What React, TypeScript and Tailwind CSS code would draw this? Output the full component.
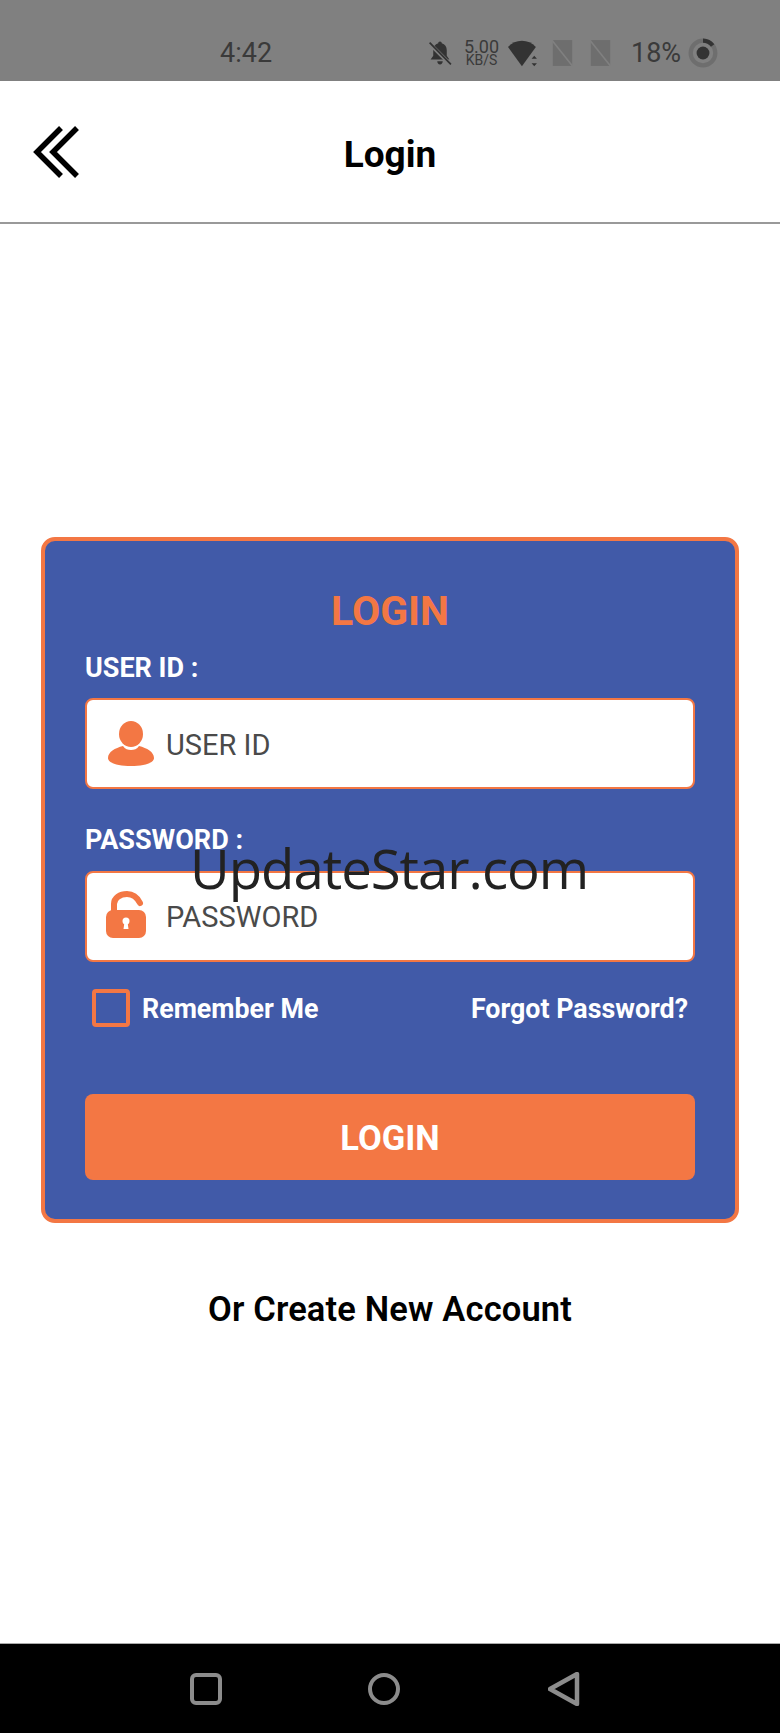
export default function App() {
  return (
    <div className="relative flex h-[1733px] w-[780px] flex-col overflow-hidden bg-white font-['Roboto',sans-serif]">
      <div className="flex h-[81px] shrink-0 items-center bg-[#808080] pl-[220px] pt-[25px] text-[#3a3a3a]">
        <span className="w-[208px] shrink-0 text-[27px] leading-none">4:42</span>
        <svg viewBox="0 0 22 24" className="h-[27px] w-[24px] shrink-0" fill="#333">
          <path d="M11 1c1 0 1.6.7 1.6 1.6 3 .8 4.6 3.2 4.6 6.4v5l2.4 3.4H2.4L4.800 14V9c0-3.200 1.600-5.600 4.600-6.400C9.400 1.700 10 1 11 1zM8.500 19h5c0 1.700-1 3-2.500 3s-2.500-1.300-2.500-3z" />
          <path d="M1.500 3 20.500 22" stroke="#808080" strokeWidth="3.500" />
          <path d="M1.500 2 21 22" stroke="#333" strokeWidth="1.600" />
        </svg>
        <div className="ml-[12px] flex w-[35px] shrink-0 flex-col items-center text-[#3a3a3a]">
          <span className="text-[18px] leading-[15px]">5.00</span>
          <span className="text-[14px] leading-[13px]">KB/S</span>
        </div>
        <svg viewBox="0 0 28 26" className="ml-[9px] h-[29px] w-[30px] shrink-0" fill="#333">
          <path d="M0 7C3.500 3 8 1 13 1s9.500 2 13 6L13 25z" />
          <path d="M24.500 15l2.500 3h-5zM24.500 25l-2.500-3h5z" />
        </svg>
        <svg viewBox="0 0 20 26" className="ml-[13px] h-[28px] w-[23px] shrink-0">
          <path d="M1 1h18v24H1z" fill="#6e6e6e" />
          <path d="M0 1 20 26" stroke="#808080" strokeWidth="1.500" />
        </svg>
        <svg viewBox="0 0 20 26" className="ml-[15px] h-[28px] w-[23px] shrink-0">
          <path d="M1 1h18v24H1z" fill="#6e6e6e" />
          <path d="M0 1 20 26" stroke="#808080" strokeWidth="1.500" />
        </svg>
        <span className="ml-[19px] w-[57px] shrink-0 text-[27px] leading-none">18%</span>
        <svg viewBox="0 0 28 28" className="h-[30px] w-[30px] shrink-0" fill="none">
          <circle cx="14" cy="14" r="11.500" stroke="#6e6e6e" strokeWidth="4" />
          <path d="M14 2.500A11.500 11.500 0 0 1 23 7" stroke="#333" strokeWidth="4" />
          <circle cx="14" cy="14" r="6" fill="#333" />
        </svg>
      </div>

      <header className="relative flex h-[143px] shrink-0 items-center justify-center border-b-2 border-[#999999] bg-white pt-[6px]">
        <svg viewBox="0 0 46 52" className="absolute left-[33px] top-[45px] h-[52px] w-[46px]" fill="none" stroke="#000" strokeWidth="5.500">
          <path d="M28 2 4 26l24 24" />
          <path d="M44 2 20 26l24 24" />
        </svg>
        <h1 className="text-[37px] font-bold leading-none text-black">Login</h1>
      </header>

      <main className="flex flex-1 flex-col items-center pt-[313px]">
        <section className="flex h-[686px] w-[698px] flex-col rounded-[14px] border-4 border-[#F37744] bg-[#415AA8] px-[40px]">
          <h2 className="mt-[47px] text-center text-[41px] font-bold leading-[46px] text-[#F37744]">LOGIN</h2>
          <label className="mt-[19px] text-[27px] font-bold leading-[30px] text-white">USER ID :</label>
          <div className="mt-[15px] flex h-[91px] items-center rounded-lg border-2 border-[#F37744] bg-white">
            <svg viewBox="0 0 46 46" className="ml-[21px] h-[46px] w-[46px] shrink-0" fill="#F37744">
              <ellipse cx="23" cy="13" rx="12" ry="13" />
              <path d="M0 37c0-6 7-10 15-12 2 3 5 4 8 4s6-1 8-4c8 2 15 6 15 12 0 5-10 8-23 8S0 42 0 37z" />
            </svg>
            <span className="ml-[12px] pt-[4px] text-[29px] leading-none text-[#4a4a4a]">USER ID</span>
          </div>
          <label className="mt-[36px] text-[27px] font-bold leading-[30px] text-white">PASSWORD :</label>
          <div className="mt-[16px] flex h-[91px] items-center rounded-lg border-2 border-[#F37744] bg-white">
            <svg viewBox="0 0 40 47" className="mb-[4px] ml-[19px] h-[47px] w-[40px] shrink-0" fill="none">
              <path d="M8 21v-8C8 7 14 3 21 3c6 0 10 3 13 9" stroke="#F37744" strokeWidth="6" strokeLinecap="round" />
              <rect x="0" y="19" width="40" height="28" rx="7" fill="#F37744" />
              <circle cx="20" cy="30" r="3.500" fill="#fff" />
              <path d="M18.500 31h3l1 7h-5z" fill="#fff" />
            </svg>
            <span className="ml-[20px] pt-[2px] text-[29px] leading-none text-[#4a4a4a]">PASSWORD</span>
          </div>
          <div className="mt-[27px] flex items-center">
            <span className="ml-[7px] h-[38px] w-[38px] shrink-0 rounded-[4px] border-4 border-[#F37744]" />
            <span className="ml-[12px] pt-[2px] text-[26.800px] font-bold leading-none text-white">Remember Me</span>
            <span className="ml-auto mr-[7px] pt-[2px] text-[26.800px] font-bold leading-none text-white">Forgot Password?</span>
          </div>
          <button className="mt-[67px] h-[86px] rounded-lg bg-[#F37744] pt-[4px] text-[34.500px] font-bold text-white">LOGIN</button>
        </section>
        <p className="mt-[66px] text-[34.500px] font-semibold leading-[40px] tracking-[0.15px] text-black">Or Create New Account</p>
      </main>

      <nav className="flex h-[90px] shrink-0 items-center border-t border-[#aaaaaa] bg-black pl-[190px]">
        <span className="h-[32px] w-[32px] rounded-[6px] border-[4px] border-[#8c8c8c]" />
        <span className="ml-[146px] h-[32px] w-[32px] rounded-full border-[4px] border-[#8c8c8c]" />
        <svg viewBox="0 0 32 34" className="ml-[148px] h-[34px] w-[32px]" fill="none" stroke="#8c8c8c" strokeWidth="4.500" strokeLinejoin="round">
          <path d="M2 17 29 2v30z" />
        </svg>
      </nav>

      <div className="absolute left-[190px] top-[832px] font-['Open_Sans',sans-serif] text-[54.500px] leading-[72px] tracking-[-1px] text-[#222222]">UpdateStar.com</div>
    </div>
  );
}
